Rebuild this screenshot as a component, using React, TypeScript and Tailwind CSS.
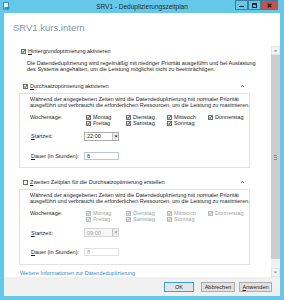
import React from "react";

const Check = ({ checked, disabled }: { checked?: boolean; disabled?: boolean }) => (
  <svg width="5" height="5" viewBox="0 0 5 5" className="shrink-0">
    <rect
      x="0.5"
      y="0.5"
      width="4"
      height="4"
      fill={disabled ? "#f4f4f4" : "#ffffff"}
      stroke={disabled ? "#bcbcbc" : "#6f6f6f"}
      strokeWidth="1"
    />
    {checked && (
      <path
        d="M1.1 2.4 L2.1 3.5 L3.9 1.2"
        fill="none"
        stroke={disabled ? "#9c9c9c" : "#2b2b2b"}
        strokeWidth="0.9"
      />
    )}
  </svg>
);

const Caret = () => (
  <svg width="5" height="4" viewBox="0 0 5 4">
    <path d="M1 3 L2.5 1.4 L4 3" fill="none" stroke="#555" strokeWidth="0.9" />
  </svg>
);

const Day = ({ label, disabled }: { label: string; disabled?: boolean }) => (
  <div className="flex h-[6px] items-center gap-[2px]">
    <Check checked disabled={disabled} />
    <span className={disabled ? "text-[#a3a3a3]" : ""}>{label}</span>
  </div>
);

const Schedule = ({ disabled, time, hours }: { disabled?: boolean; time: string; hours: string }) => {
  const muted = disabled ? "text-[#a3a3a3]" : "";
  return (
    <div className="mt-[4px] ml-[15px] w-[231px] border border-[#e1e1e1] pb-[7px] pl-[10px] pt-[2px]">
      <div className="whitespace-nowrap leading-[6px]">
        Während der angegebenen Zeiten wird die Datendeduplizierung mit normaler Priorität
        <br />
        ausgeführt und verbraucht die erforderlichen Ressourcen, um die Leistung zu maximieren.
      </div>
      <div className="mt-[6px] grid grid-cols-[56px_40px_41px_41px_auto] leading-[6px]">
        <span className="h-[6px]">Wochentage:</span>
        <Day label="Montag" disabled={disabled} />
        <Day label="Dienstag" disabled={disabled} />
        <Day label="Mittwoch" disabled={disabled} />
        <Day label="Donnerstag" disabled={disabled} />
        <span />
        <Day label="Freitag" disabled={disabled} />
        <Day label="Samstag" disabled={disabled} />
        <Day label="Sonntag" disabled={disabled} />
      </div>
      <div className="mt-[6px] flex items-center">
        <span className="w-[54px] pl-[1px]">
          <span className="underline">S</span>tartzeit:
        </span>
        <div
          className={`flex h-[9px] w-[35px] items-center border ${
            disabled ? "border-[#d6d6d6] bg-[#f6f6f6]" : "border-[#acacac] bg-white"
          }`}
        >
          <span className={`flex-1 pl-[2px] ${muted}`}>{time}</span>
          <span className="flex h-full w-[6px] items-center justify-center border-l border-[#c4c4c4] bg-[#ececec]">
            <svg width="4" height="3" viewBox="0 0 4 3">
              <path d="M0.3 0.6 L3.7 0.6 L2 2.6 Z" fill={disabled ? "#9c9c9c" : "#333"} />
            </svg>
          </span>
        </div>
      </div>
      <div className="mt-[11px] flex items-center">
        <span className="w-[54px] pl-[1px]">
          <span className="underline">D</span>auer (in Stunden):
        </span>
        <div
          className={`flex h-[8px] w-[35px] items-center border pl-[2px] ${
            disabled ? "border-[#e0e0e0] text-[#a3a3a3]" : "border-[#b9c9d9]"
          }`}
        >
          {hours}
        </div>
      </div>
    </div>
  );
};

const SectionHead = ({ checked, children }: { checked?: boolean; children: React.ReactNode }) => (
  <div className="ml-[15px] flex h-[6px] w-[231px] items-center pl-[4px] pr-[5px]">
    <Check checked={checked} />
    <span className="ml-[2px] flex-1 leading-[6px]">{children}</span>
    <Caret />
  </div>
);

const TitleButton = ({ children, close }: { children: React.ReactNode; close?: boolean }) => (
  <div
    className={`flex h-[10px] items-center justify-center border border-[#3f7f9c] ${
      close ? "w-[17px] bg-[#c7504c]" : "w-[13px] bg-[#66c8e8]"
    }`}
  >
    {children}
  </div>
);

export default function App() {
  return (
    <div className="flex h-[300px] w-[284px] flex-col overflow-hidden bg-[#66c8e8] font-['Liberation_Sans',Arial,sans-serif] text-[5.5px] text-[#1e1e1e]">
      {/* title bar */}
      <div className="grid h-[13px] grid-cols-[1fr_auto_1fr] items-start">
        <div className="pl-[3px] pt-[2px]">
          <svg width="7" height="8" viewBox="0 0 7 8">
            <rect x="0.5" y="0.5" width="5" height="6.5" fill="#e8f6fc" stroke="#3d8fb6" />
            <rect x="1.5" y="5" width="5" height="2.5" fill="#3d8fb6" />
          </svg>
        </div>
        <div className="pt-[3px] text-[6.5px] leading-[7px] text-[#1b2a33]">SRV1 - Deduplizierungszeitplan</div>
        <div className="flex justify-end pr-[6px]">
          <TitleButton>
            <span className="mt-[3px] h-[1.5px] w-[5px] bg-[#1d2a30]" />
          </TitleButton>
          <TitleButton>
            <span className="h-[5px] w-[5px] border border-[#1d2a30] border-t-2" />
          </TitleButton>
          <TitleButton close>
            <svg width="5" height="5" viewBox="0 0 5 5">
              <path d="M0.7 0.7 L4.3 4.3 M4.3 0.7 L0.7 4.3" stroke="#2a1a1a" strokeWidth="1.3" />
            </svg>
          </TitleButton>
        </div>
      </div>

      <div className="mx-[4px] mb-[4px] flex flex-1 flex-col bg-white">
        {/* header */}
        <div className="h-[33px] pl-[9px] pt-[9px] text-[9.5px] leading-[12px] text-[#7898ad]">SRV1.kurs.intern</div>

        {/* scrolling area */}
        <div className="flex h-[231px]">
          <div className="flex-1 overflow-hidden">
            <div className="ml-[17px] mt-[2px] flex h-[6px] items-center gap-[2px]">
              <Check checked />
              <span className="leading-[6px]">
                <span className="underline">H</span>intergrundoptimierung aktivieren
              </span>
            </div>
            <div className="ml-[23px] mt-[6px] whitespace-nowrap leading-[6px]">
              Die Datendeduplizierung wird regelmäßig mit niedriger Priorität ausgeführt und bei Auslastung
              <br />
              des Systems angehalten, um die Leistung möglichst nicht zu beeinträchtigen.
            </div>

            <div className="mt-[11px]">
              <SectionHead checked>
                <span className="underline">D</span>urchsatzoptimierung aktivieren
              </SectionHead>
              <Schedule time="22:00" hours="6" />
            </div>

            <div className="mt-[11px]">
              <SectionHead>
                <span className="underline">Z</span>weiten Zeitplan für die Durchsatzoptimierung erstellen
              </SectionHead>
              <Schedule disabled time="09:00" hours="8" />
            </div>

            <div className="ml-[16px] mt-[5px] leading-[6px] text-[#2f8fc4]">
              Weitere Informationen zur Datendeduplizierung
            </div>
          </div>

          {/* scrollbar */}
          <div className="flex w-[9px] flex-col bg-[#f0f0f0]">
            <div className="flex h-[9px] items-center justify-center border border-[#e3e3e3] bg-[#f4f4f4]">
              <svg width="5" height="3" viewBox="0 0 5 3">
                <path d="M0.5 2.6 L2.5 0.4 L4.5 2.6 Z" fill="#9a9a9a" />
              </svg>
            </div>
            <div className="flex h-[204px] items-center justify-center bg-[#cdcdcd]">
              <div className="flex flex-col gap-[1px]">
                <span className="h-px w-[3px] bg-[#8a8a8a]" />
                <span className="h-px w-[3px] bg-[#8a8a8a]" />
                <span className="h-px w-[3px] bg-[#8a8a8a]" />
              </div>
            </div>
            <div className="flex-1" />
            <div className="flex h-[9px] items-center justify-center border border-[#e3e3e3] bg-[#f4f4f4]">
              <svg width="5" height="3" viewBox="0 0 5 3">
                <path d="M0.5 0.4 L2.5 2.6 L4.5 0.4 Z" fill="#9a9a9a" />
              </svg>
            </div>
          </div>
        </div>

        {/* button bar */}
        <div className="flex h-[19px] items-start justify-end bg-[#f0f0f0] pr-[8px] pt-[5px]">
          <button className="flex h-[10px] w-[30px] items-center justify-center border border-[#3c9ee0] bg-[#e5e5e5]">
            OK
          </button>
          <button className="ml-[7px] flex h-[10px] w-[34px] items-center justify-center border border-[#adadad] bg-[#e1e1e1]">
            Abbrechen
          </button>
          <button className="ml-[4px] flex h-[10px] w-[33px] items-center justify-center border border-[#adadad] bg-[#e1e1e1]">
            <span>
              <span className="underline">A</span>nwenden
            </span>
          </button>
        </div>
      </div>
    </div>
  );
}
